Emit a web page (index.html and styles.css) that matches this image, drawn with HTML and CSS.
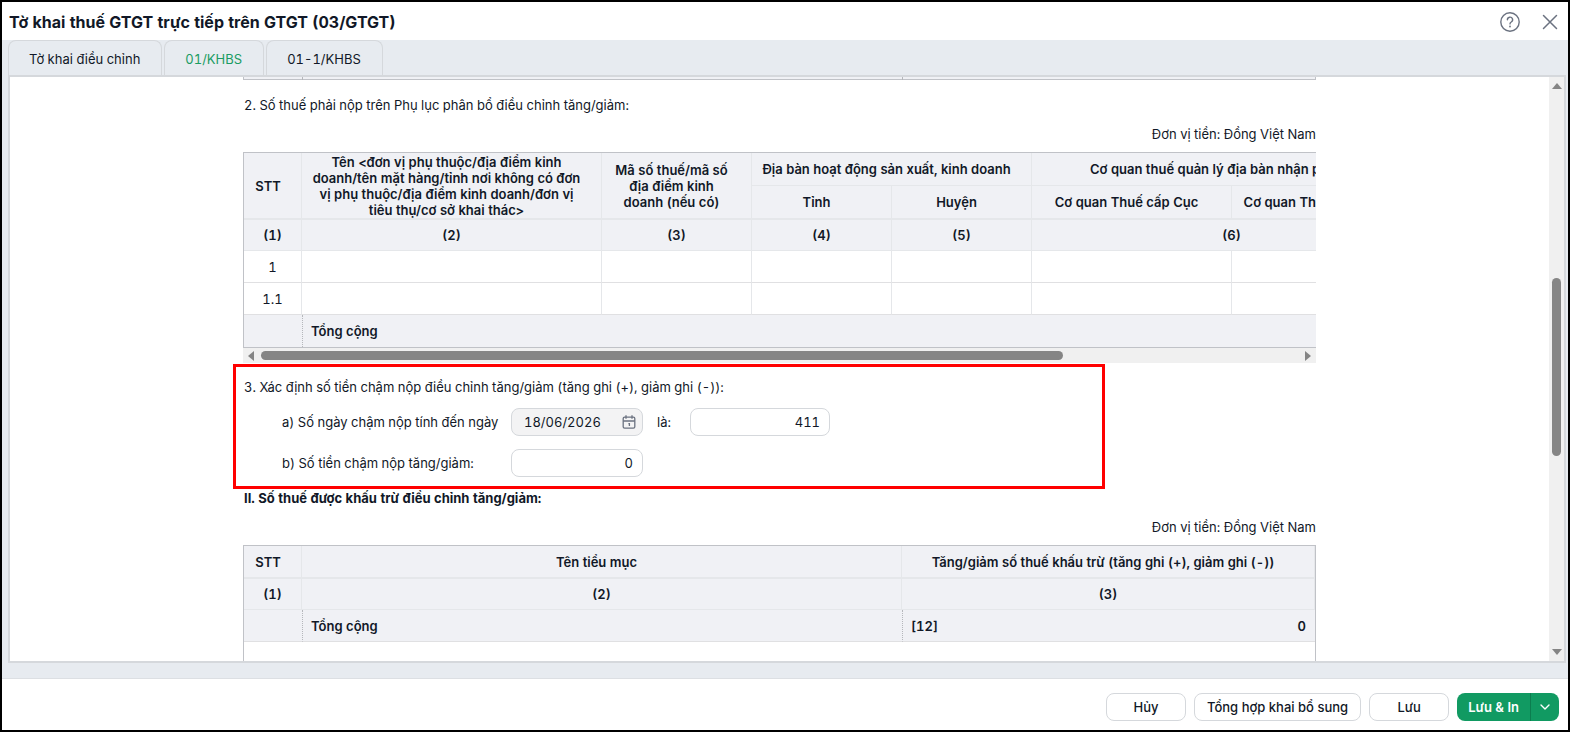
FILE: index.html
```html
<!DOCTYPE html>
<html lang="vi">

<head>
  <meta charset="UTF-8">
  <meta name="viewport" content="width=device-width, initial-scale=1.0">
  <title>Tờ khai thuế GTGT trực tiếp trên GTGT (03/GTGT)</title>
  <link rel="stylesheet" href="styles.css">
</head>

<body>
  <div class="window">
    <header class="header">
      <h1>Tờ khai thuế GTGT trực tiếp trên GTGT (03/GTGT)</h1>
      <div class="header-icons">
        <button type="button" class="icon-btn" aria-label="Trợ giúp">
          <svg width="20" height="20" viewBox="0 0 20 20" fill="none" stroke="#6b7280" stroke-width="1.4">
            <circle cx="10" cy="10" r="9.2" />
            <path d="M7.4 7.8a2.6 2.6 0 1 1 3.9 2.2c-.9.5-1.3.9-1.3 1.9" stroke-linecap="round" />
            <circle cx="10" cy="14.5" r=".9" fill="#6b7280" stroke="none" />
          </svg>
        </button>
        <button type="button" class="icon-btn" aria-label="Đóng">
          <svg width="20" height="20" viewBox="0 0 20 20" fill="none" stroke="#6b7280" stroke-width="1.5">
            <path d="M3.5 3.5l13 13M16.5 3.5l-13 13" stroke-linecap="round" />
          </svg>
        </button>
      </div>
    </header>

    <main class="main">
      <nav class="tabs">
        <button type="button" class="tab">Tờ khai điều chỉnh</button>
        <button type="button" class="tab active">01/KHBS</button>
        <button type="button" class="tab">01-1/KHBS</button>
      </nav>

      <div class="panel">
        <div class="page">
          <div class="content">
            <div class="table-end"><span class="end-stt"></span><span class="end-name"></span></div>

            <p class="text">2. Số thuế phải nộp trên Phụ lục phân bổ điều chỉnh tăng/giảm:</p>
            <p class="unit">Đơn vị tiền: Đồng Việt Nam</p>

            <div class="table-wrap">
              <table class="grid wide">
                <colgroup>
                  <col class="c-stt">
                  <col class="c-300">
                  <col class="c-150">
                  <col class="c-140">
                  <col class="c-140">
                  <col class="c-200">
                  <col class="c-200">
                </colgroup>
                <thead>
                  <tr class="head">
                    <th rowspan="2">STT</th>
                    <th rowspan="2">Tên &lt;đơn vị phụ thuộc/địa điểm kinh doanh/tên mặt hàng/tỉnh nơi không có đơn vị phụ thuộc/địa điểm kinh doanh/đơn vị tiêu thụ/cơ sở khai thác&gt;</th>
                    <th rowspan="2">Mã số thuế/mã số địa điểm kinh doanh (nếu có)</th>
                    <th colspan="2">Địa bàn hoạt động sản xuất, kinh doanh</th>
                    <th colspan="2">Cơ quan thuế quản lý địa bàn nhận phân bổ</th>
                  </tr>
                  <tr class="head last">
                    <th>Tỉnh</th>
                    <th>Huyện</th>
                    <th>Cơ quan Thuế cấp Cục</th>
                    <th>Cơ quan Thuế cấp Chi cục</th>
                  </tr>
                  <tr class="nums">
                    <th>(1)</th>
                    <th>(2)</th>
                    <th>(3)</th>
                    <th>(4)</th>
                    <th>(5)</th>
                    <th colspan="2">(6)</th>
                  </tr>
                </thead>
                <tbody>
                  <tr>
                    <td>1</td>
                    <td></td>
                    <td></td>
                    <td></td>
                    <td></td>
                    <td></td>
                    <td></td>
                  </tr>
                  <tr>
                    <td>1.1</td>
                    <td></td>
                    <td></td>
                    <td></td>
                    <td></td>
                    <td></td>
                    <td></td>
                  </tr>
                </tbody>
                <tfoot>
                  <tr>
                    <td></td>
                    <td colspan="6" class="dotted">Tổng cộng</td>
                  </tr>
                </tfoot>
              </table>
            </div>
            <div class="hscroll">
              <svg width="6" height="10" viewBox="0 0 6 10"><path d="M6 0v10L0 5z" fill="#858585" /></svg>
              <div class="htrack"><div class="hthumb"></div></div>
              <svg width="6" height="10" viewBox="0 0 6 10"><path d="M0 0v10l6-5z" fill="#858585" /></svg>
            </div>

            <section class="late">
              <p class="text">3. Xác định số tiền chậm nộp điều chỉnh tăng/giảm (tăng ghi (+), giảm ghi (-)):</p>
              <div class="row">
                <label class="row-label" for="date">a) Số ngày chậm nộp tính đến ngày</label>
                <div class="field date">
                  <input type="text" id="date" value="18/06/2026" readonly>
                  <svg width="14" height="14" viewBox="0 0 14 14" fill="none" stroke="#6b7280" stroke-width="1.3">
                    <rect x="1.2" y="2.2" width="11.6" height="11" rx="1.4" />
                    <path d="M1.2 6h11.6M4 .2v3.6M10 .2v3.6M6.4 8.6h1v2.4" />
                  </svg>
                </div>
                <label class="is" for="days">là:</label>
                <input type="text" class="field days" id="days" value="411">
              </div>
              <div class="row">
                <label class="row-label" for="amount">b) Số tiền chậm nộp tăng/giảm:</label>
                <input type="text" class="field amount" id="amount" value="0">
              </div>
            </section>

            <h2>II. Số thuế được khấu trừ điều chỉnh tăng/giảm:</h2>
            <p class="unit">Đơn vị tiền: Đồng Việt Nam</p>

            <div class="table-wrap tall">
              <table class="grid">
                <colgroup>
                  <col class="c-stt">
                  <col class="c-600">
                  <col>
                </colgroup>
                <thead>
                  <tr class="head last">
                    <th>STT</th>
                    <th>Tên tiểu mục</th>
                    <th>Tăng/giảm số thuế khấu trừ (tăng ghi (+), giảm ghi (-))</th>
                  </tr>
                  <tr class="nums">
                    <th>(1)</th>
                    <th>(2)</th>
                    <th>(3)</th>
                  </tr>
                </thead>
                <tfoot>
                  <tr>
                    <td></td>
                    <td class="dotted">Tổng cộng</td>
                    <td class="dotted">
                      <div class="sum"><span>[12]</span><span>0</span></div>
                    </td>
                  </tr>
                </tfoot>
              </table>
            </div>
          </div>
        </div>
        <div class="vscroll">
          <svg width="10" height="6" viewBox="0 0 10 6"><path d="M0 6h10L5 0z" fill="#858585" /></svg>
          <div class="vtrack"><div class="vthumb"></div></div>
          <svg width="10" height="6" viewBox="0 0 10 6"><path d="M0 0h10L5 6z" fill="#858585" /></svg>
        </div>
      </div>
    </main>

    <footer class="footer">
      <button type="button" class="btn">Hủy</button>
      <button type="button" class="btn">Tổng hợp khai bổ sung</button>
      <button type="button" class="btn">Lưu</button>
      <div class="split">
        <button type="button" class="save">Lưu &amp; In</button>
        <button type="button" class="more" aria-label="Tùy chọn khác">
          <svg width="10" height="6" viewBox="0 0 10 6" fill="none" stroke="#fff" stroke-width="1.4">
            <path d="M1 1l4 4 4-4" stroke-linecap="round" stroke-linejoin="round" />
          </svg>
        </button>
      </div>
    </footer>
  </div>
</body>

</html>
```
FILE: styles.css
```css
* {
  margin: 0;
  padding: 0;
  box-sizing: border-box;
}
body, button, input {
  font-family: Inter, "Liberation Sans", sans-serif;
  font-size: 13px;
  font-variant-numeric: tabular-nums;
  color: #111827;
}
button {
  cursor: pointer;
}
svg {
  display: block;
  flex-shrink: 0;
}
.window {
  display: flex;
  flex-direction: column;
  height: 100vh;
  border: 2px solid #000;
  background-color: #fff;
}

/* header */
.header {
  display: flex;
  align-items: center;
  justify-content: space-between;
  height: 38px;
  padding: 2px 8px 0 7px;
}
.header h1 {
  font-size: 16px;
  font-weight: 700;
  line-height: 20px;
}
.header-icons {
  display: flex;
  gap: 20px;
}
.icon-btn {
  border: none;
  background: none;
}

/* tabs + panel */
.main {
  flex: 1;
  min-height: 0;
  display: flex;
  flex-direction: column;
  background-color: #e7ebf0;
  padding: 0 2px 15px 6px;
  border-bottom: 1px solid #dcdfe3;
}
.tabs {
  display: flex;
  gap: 2px;
}
.tab {
  height: 35px;
  padding: 2px 21px 0 20px;
  border: 1px solid #d5d8dc;
  border-bottom: none;
  border-radius: 8px 8px 0 0;
  background-color: #e7ebf0;
}
.tab.active {
  color: #1a9c63;
}
.panel {
  flex: 1;
  min-height: 0;
  display: flex;
  border: 2px solid #d5d8dc;
  background-color: #fff;
}
.page {
  flex: 1;
  overflow: hidden;
}
.content {
  width: 1073px;
  max-width: 100%;
  margin: 0 auto;
}
.vscroll {
  display: flex;
  flex-direction: column;
  align-items: center;
  width: 15px;
  padding: 6px 0;
  background-color: #f0f0f0;
}
.vtrack {
  flex: 1;
  width: 9px;
  padding-top: 189px;
}
.vthumb {
  height: 178px;
  border-radius: 5px;
  background-color: #858585;
}

/* text */
.text, .unit {
  line-height: 20px;
}
.text, h2 {
  padding-left: 1px;
}
h2 {
  margin-bottom: 10px;
  font-size: 13px;
  font-weight: 700;
  line-height: 18px;
}
.unit {
  text-align: right;
  margin: 9px 0 8px;
}
.table-end {
  display: flex;
  height: 3px;
  margin-bottom: 15px;
  border: 1px solid #c0c2c7;
  border-top: none;
  background-color: #f0f1f5;
}
.table-end span {
  border-right: 1px dotted #b5b7bb;
}
.end-stt {
  width: 59px;
}
.end-name {
  width: 600px;
}

/* tables */
.table-wrap {
  overflow: hidden;
  border: 1px solid #c0c2c7;
  border-right: none;
}
.table-wrap.tall {
  height: 160px;
  border-right: 1px solid #c0c2c7;
}
.grid {
  width: 100%;
  table-layout: fixed;
  border-collapse: separate;
  border-spacing: 0;
}
.grid.wide {
  width: 1188px;
}
.c-stt {
  width: 58px;
}
.c-140 {
  width: 140px;
}
.c-150 {
  width: 150px;
}
.c-200 {
  width: 200px;
}
.c-300 {
  width: 300px;
}
.c-600 {
  width: 600px;
}
.grid th, .grid td {
  height: 32px;
  line-height: 16px;
  border-right: 1px solid #e5e7ea;
  border-bottom: 1px solid #e0e0e2;
  text-align: center;
}
.grid th {
  background-color: #f0f1f5;
  border-bottom-color: #e5e7ea;
  font-weight: 600;
}
.grid .nums th {
  height: 31px;
}
.grid .head th {
  height: 33px;
  padding: 0 20px 0 10px;
}
.grid.wide .last th {
  height: 34px;
}
.grid .head th[rowspan], .grid .last th {
  border-bottom-width: 2px;
}
.grid .head th:first-child {
  padding: 0 9px 0 0;
}
.grid.wide .last th:first-child {
  padding: 0 20px 0 10px;
}
.grid tfoot td {
  background-color: #f0f1f5;
  border-right: none;
  font-weight: 600;
}
.grid tfoot .dotted {
  padding: 0 9px 0 8px;
  border-left: 1px dotted #b5b7bb;
  text-align: left;
}
.wide tfoot td {
  border-bottom: none;
}
.sum {
  display: flex;
  justify-content: space-between;
}
.hscroll {
  display: flex;
  align-items: center;
  height: 15px;
  padding: 0 5px;
  background-color: #f0f0f0;
}
.htrack {
  flex: 1;
  padding: 0 3px 0 7px;
}
.hthumb {
  width: 77%;
  height: 9px;
  border-radius: 5px;
  background-color: #858585;
}

/* late payment */
.late {
  width: 872px;
  margin: 1px 0 0 -10px;
  padding: 10px 7px 9px;
  border: 3px solid #f00;
}
.row {
  display: flex;
  align-items: center;
  margin-top: 13px;
  padding-left: 39px;
}
.text + .row {
  margin-top: 11px;
}
.row-label {
  width: 229px;
}
.field {
  width: 132px;
  height: 28px;
  padding: 0 9px;
  border: 1px solid #d5d8dc;
  border-radius: 8px;
  background-color: #fff;
  text-align: right;
}
.date {
  display: flex;
  align-items: center;
  justify-content: space-between;
  padding: 0 6px 0 12px;
  background-color: #f3f3f4;
}
.date input {
  width: 90px;
  border: none;
  outline: none;
  background: none;
}
.is {
  width: 47px;
  padding-left: 14px;
}
.days {
  width: 140px;
}

/* footer */
.footer {
  display: flex;
  align-items: center;
  justify-content: flex-end;
  gap: 8px;
  height: 51px;
  padding: 5px 9px 0;
}
.btn {
  min-width: 80px;
  height: 28px;
  padding: 0 12px;
  border: 1px solid #d5d8dc;
  border-radius: 8px;
  background-color: #fff;
  font-weight: 500;
}
.split {
  display: flex;
  height: 28px;
  border-radius: 8px;
  overflow: hidden;
}
.save, .more {
  border: none;
  background-color: #119a62;
  color: #fff;
  font-weight: 600;
}
.save {
  padding: 0 11px;
}
.more {
  display: flex;
  align-items: center;
  justify-content: center;
  width: 29px;
  border-left: 1px solid #0c7d4f;
}
```
